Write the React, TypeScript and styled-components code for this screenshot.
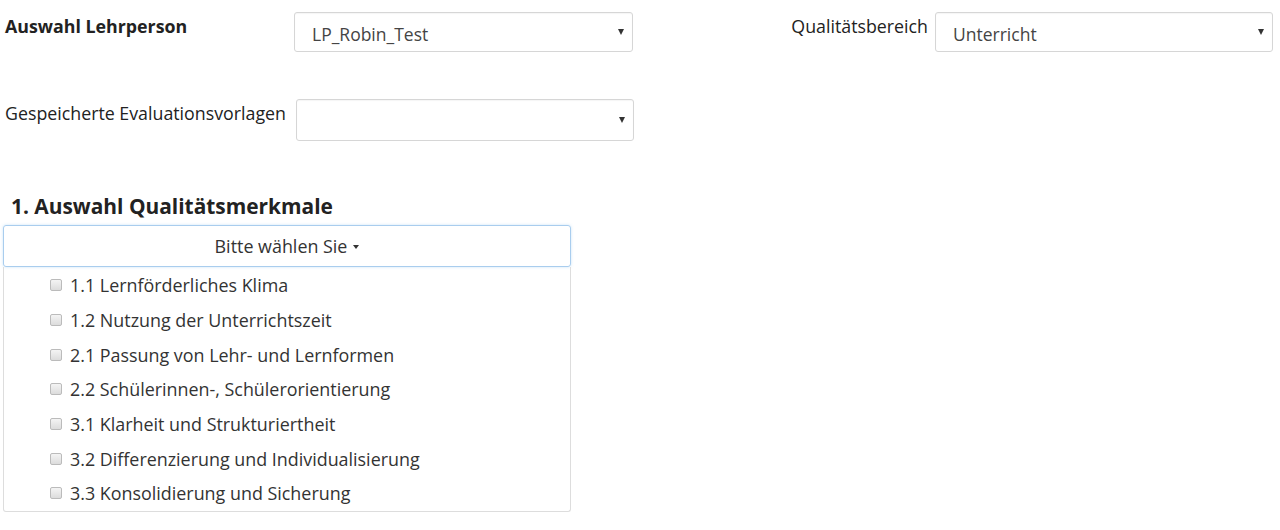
import styled, { createGlobalStyle } from 'styled-components';

const GlobalStyle = createGlobalStyle`
  body {
    margin: 0;
    background: #fff;
    font-family: "Open Sans", "Noto Sans", sans-serif;
    color: #333;
  }
`;

const Page = styled.div`
  padding: 12px 7px 0 5px;
  display: flex;
  flex-direction: column;
`;

const TopRow = styled.div`
  display: grid;
  grid-template-columns: 289px 339px 1fr 338px;
  align-items: start;
`;

const SecondRow = styled.div`
  display: grid;
  grid-template-columns: 291px 338px;
  align-items: start;
  margin-top: 47px;
`;

const Label = styled.div<{ $bold?: boolean; $right?: boolean }>`
  font-size: 17.8px;
  font-weight: ${(p) => (p.$bold ? 700 : 400)};
  text-align: ${(p) => (p.$right ? 'right' : 'left')};
  padding-right: ${(p) => (p.$right ? '7px' : '0')};
  padding-top: 2px;
  line-height: 24px;
  color: #222;
`;

const SelectBox = styled.div<{ $tall?: boolean }>`
  height: ${(p) => (p.$tall ? '42px' : '40px')};
  border: 1px solid #d6d6d6;
  border-radius: 3px;
  box-sizing: border-box;
  display: flex;
  align-items: center;
  justify-content: space-between;
  padding: 4px 8px 0 17px;
  font-size: 17.5px;
  color: #444;
  box-shadow: inset 0 1px 1px rgba(0, 0, 0, 0.04);
`;

const Caret = styled.span`
  width: 0;
  height: 0;
  border-left: 3.5px solid transparent;
  border-right: 3.5px solid transparent;
  border-top: 6px solid #333;
  margin-top: -4px;
`;

const Heading = styled.h3`
  margin: 52px 0 0 6px;
  font-size: 20.9px;
  font-weight: 700;
  line-height: 26px;
  color: #222;
`;

const Multiselect = styled.div`
  width: 568px;
  margin: 6px 0 0 -2px;
  display: flex;
  flex-direction: column;
`;

const ToggleButton = styled.div`
  height: 42px;
  box-sizing: border-box;
  border: 1px solid #a9cdee;
  border-radius: 3px;
  box-shadow: 0 0 3px rgba(102, 175, 233, 0.35);
  display: flex;
  align-items: center;
  justify-content: center;
  gap: 6px;
  font-size: 17.9px;
  color: #333;
`;

const SmallCaret = styled.span`
  width: 0;
  height: 0;
  border-left: 3.5px solid transparent;
  border-right: 3.5px solid transparent;
  border-top: 4px solid #333;
  margin-top: 2px;
`;

const OptionList = styled.ul`
  list-style: none;
  margin: 0;
  padding: 1px 0 0;
  height: 245px;
  box-sizing: border-box;
  border: 1px solid #ddd;
  border-top: none;
  border-radius: 0 0 3px 3px;
`;

const Option = styled.li`
  height: 34.7px;
  display: flex;
  align-items: center;
  padding-left: 46px;
  font-size: 17.9px;
  color: #333;
`;

const Check = styled.span`
  width: 10px;
  height: 10px;
  border: 1px solid #bbb;
  border-radius: 2px;
  background: linear-gradient(#f4f4f4, #dcdcdc);
  margin-right: 8px;
  flex-shrink: 0;
`;

const options = [
  '1.1 Lernförderliches Klima',
  '1.2 Nutzung der Unterrichtszeit',
  '2.1 Passung von Lehr- und Lernformen',
  '2.2 Schülerinnen-, Schülerorientierung',
  '3.1 Klarheit und Strukturiertheit',
  '3.2 Differenzierung und Individualisierung',
  '3.3 Konsolidierung und Sicherung',
];

export default function App() {
  return (
    <>
      <GlobalStyle />
      <Page>
        <TopRow>
          <Label $bold>Auswahl Lehrperson</Label>
          <SelectBox>
            <span>LP_Robin_Test</span>
            <Caret />
          </SelectBox>
          <Label $right>Qualitätsbereich</Label>
          <SelectBox>
            <span>Unterricht</span>
            <Caret />
          </SelectBox>
        </TopRow>
        <SecondRow>
          <Label>Gespeicherte Evaluationsvorlagen</Label>
          <SelectBox $tall>
            <span />
            <Caret />
          </SelectBox>
        </SecondRow>
        <Heading>1. Auswahl Qualitätsmerkmale</Heading>
        <Multiselect>
          <ToggleButton>
            Bitte wählen Sie
            <SmallCaret />
          </ToggleButton>
          <OptionList>
            {options.map((o) => (
              <Option key={o}>
                <Check />
                {o}
              </Option>
            ))}
          </OptionList>
        </Multiselect>
      </Page>
    </>
  );
}
